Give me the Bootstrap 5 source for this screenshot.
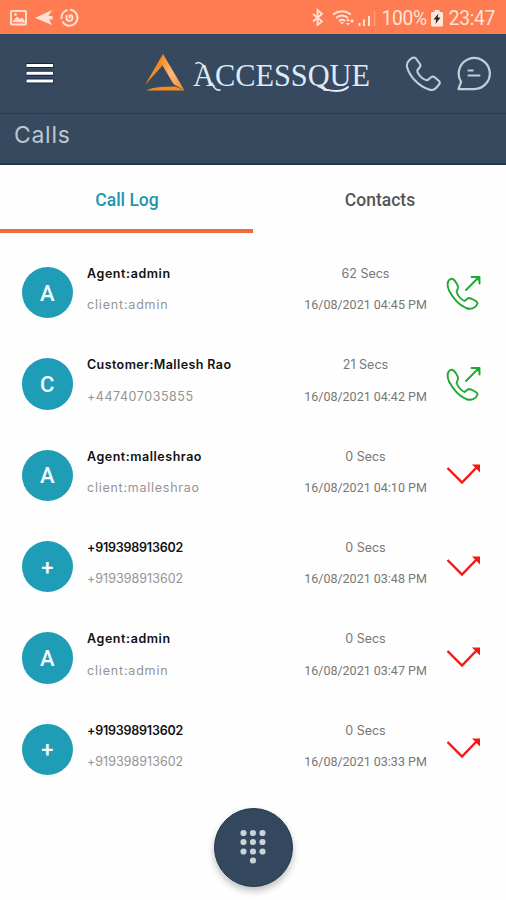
<!DOCTYPE html>
<html lang="en">
<head>
<meta charset="utf-8">
<meta name="viewport" content="width=device-width, initial-scale=1">
<title>Accessque - Calls</title>
<link href="https://cdn.jsdelivr.net/npm/bootstrap@5.3.0/dist/css/bootstrap.min.css" rel="stylesheet">
<style>
body{font-family:Inter,"Liberation Sans",sans-serif;height:900px;overflow:hidden;background:#fefefe}
svg{display:block;flex-shrink:0}
.status-bar{height:34px;background:#ff7c53;color:#ffe3d6;font:400 19.3px Roboto,sans-serif;letter-spacing:-.35px;padding:2px 11px 0 9px}
.status-bar .charge{margin-left:5px}
.status-bar .clock{margin-left:6px}
.app-bar{height:80px;background:#36495f;border-bottom:1px solid #2a3a50;padding:0 15px 0 26px}
.brand-logo{margin-left:85px;margin-right:auto;overflow:visible}
.title-bar{height:50.5px;background:#36495f;color:#bcc8d0;border-bottom:2px solid #1d3656;font-size:23px;letter-spacing:.7px;padding:0 14px 4px}
.tab-row{height:68px}
.tab-row .nav-link{font:500 17.5px Roboto,sans-serif;color:#555;border-radius:0;border-bottom:4px solid transparent;padding:6px 0 0 1px}
.tab-row .nav-link.active{color:#1f96ad;border-color:#f06a3c}
.call-list{padding-top:14.5px}
.call-row{height:91.35px;padding:0 24px 0 21.5px}
.avatar{width:51.5px;height:51.5px;background:#209db6;color:#f2fbfd;font:500 22px Roboto,sans-serif;flex-shrink:0;padding-top:1px}
.who,.when{margin-top:-6.5px}
.who{width:200px;margin-left:14px}
.who div,.when div{height:31.6px;line-height:31.6px;white-space:nowrap}
.caller{font-size:12.5px;font-weight:600;color:#111}
.number{font-size:12.5px;color:#949494}
.when{width:157px;font-size:12.5px;color:#777;text-align:center}
.when .stamp{font:400 12.5px/31.6px Roboto,sans-serif;color:#777}
.name-a{letter-spacing:.58px}.name-b{letter-spacing:.4px}.name-c{letter-spacing:.52px}.name-d{letter-spacing:-.22px}
.sub-a{letter-spacing:.82px}.sub-b{letter-spacing:.55px}.sub-c{letter-spacing:.75px}.sub-d{letter-spacing:.03px}
.dial{width:79px;height:79px;background:#33475f;border:1px solid #203650;box-shadow:0 4px 7px rgba(0,0,0,.25);padding:0;margin-top:12.5px}
</style>
<script src="https://cdn.jsdelivr.net/npm/bootstrap@5.3.0/dist/js/bootstrap.bundle.min.js"></script>
</head>
<body>
<svg width="0" height="0" class="position-absolute">
  <symbol id="outgoing" viewBox="0 0 36 36">
    <g fill="none" stroke="#22a832" stroke-width="1.9" stroke-linecap="round" stroke-linejoin="round">
      <path d="M4.500 4C1 6 .8 10 3 15.500C7 23 13 30 20 33C25 35 30 33 31.500 28.500C32 26.500 25 23 22.500 23L18.500 26C15 24.500 12 20.500 10.500 17L12 13C12.500 11 8 2 4.500 4Z"/>
      <path d="M20 15L32 3M25.500 2H33.500V8.500"/>
    </g>
    <path fill="#22a832" d="M28 1.500H34V7.500Z"/>
  </symbol>
  <symbol id="missed" viewBox="0 0 36 36">
    <path d="M1.500 11L16 25.500L31 10" fill="none" stroke="#f51616" stroke-width="2.400"/>
    <path d="M26 7.500H34V15.500Z" fill="#f51616"/>
  </symbol>
</svg>

<header>
  <div class="status-bar d-flex align-items-center justify-content-between">
    <svg width="72" height="20" viewBox="0 0 72 20" fill="none" stroke="#ffe0d2">
      <rect x="2" y="3" width="15" height="13.500" rx="1" stroke-width="2"/>
      <path d="M4 13.500L8 9L11 11.500L13 10L16 14Z" fill="#ffe0d2"/><circle cx="6.500" cy="6.500" r="1" fill="#ffe0d2"/>
      <path d="M26 10L43 2L39.500 8H43.500V11.500H40L43 17Z" fill="#ffe0d2" stroke="none"/>
      <circle cx="60.500" cy="9.700" r="8" stroke-width="2" stroke-dasharray="21 2.500 12 2.500"/>
      <path d="M57.500 7V10a3 3 0 0 0 6 0a3 3 0 0 0-2-3M60.500 6.500V10.500" stroke-width="1.900"/>
    </svg>
    <div class="d-flex align-items-center">
      <svg width="66" height="22" viewBox="0 0 66 22" fill="none" stroke="#ffe3d6">
        <path d="M2 7L11 14.500L6.500 18V3L11 7L2 14.500" stroke-width="1.800"/>
        <g stroke-width="1.800"><path d="M22 7.500Q31 1 40 7.500M25 11Q31 6 37 11M28 14Q31 11.500 34 14"/></g>
        <path d="M29 15L31 17.500L33 15ZM35 14L37 11.500L39 14ZM35 16H39L37 18.500ZM39 14L41 12L43 14L41 16Z" fill="#ffe3d6" stroke="none"/>
        <path d="M48.500 19V16M53 19V12.500M58 19V9" stroke-width="2"/>
        <path d="M63.500 19V4" stroke-width="1.500" opacity=".35"/>
      </svg>
      <span class="charge">100%</span>
      <svg class="ms-1" width="12" height="19" viewBox="0 0 12 19"><path fill="#ffe9df" d="M1.500 3H3.500V1H8.500V3H10.500Q12 3 12 4.500V16Q12 17.500 10.500 17.500H1.500Q0 17.500 0 16V4.500Q0 3 1.500 3Z"/><path d="M7.500 4.500L2.500 10.500H5.200L4.500 15L9.500 8.500H6.700Z" fill="#33231c"/></svg>
      <span class="clock">23:47</span>
    </div>
  </div>

  <nav class="app-bar d-flex align-items-center">
    <svg width="28" height="24" viewBox="0 0 28 24"><path d="M0 3.500H27.500M0 11.200H27.500M0 18.900H27.500" stroke="#14244b" stroke-width="5"/><path d="M.5 3.500H27M.5 11.200H27M.5 18.900H27" stroke="#fff" stroke-width="3"/></svg>
    <svg class="brand-logo" width="236" height="50" viewBox="0 0 236 50" role="img">
      <defs><linearGradient id="edge" x1="0" y1="0" x2="1" y2="1"><stop offset="0" stop-color="#f58a1c"/><stop offset=".5" stop-color="#ffb779"/><stop offset="1" stop-color="#f28a27"/></linearGradient></defs>
      <path fill="#f58b20" d="M24 5L6 36L23.500 16.500Z"/>
      <path fill="url(#edge)" d="M24 5L45.500 41.500L34.500 35L22 14Z"/>
      <path fill="#f58b20" d="M45.500 41.500H7.500Q13.500 37.500 36.500 37.500Z"/>
      <text x="54" y="36.500" textLength="177" lengthAdjust="spacingAndGlyphs" font-family="Liberation Serif, serif" font-size="32.500" fill="#dfeaf7">ACCESSQUE</text>
      <path d="M57 14.500Q60 12 64 16M73 34Q76 42 81 41" fill="none" stroke="#dfeaf7" stroke-width="1.600" stroke-linecap="round"/>
      <path d="M179 37Q188 42 197 42Q205 42 209 38" fill="none" stroke="#dfeaf7" stroke-width="2" stroke-linecap="round"/>
    </svg>
    <div class="d-flex">
      <svg width="37" height="38" viewBox="-1 -1 37 38" fill="none" stroke="#c0d0d9" stroke-width="2.100" stroke-linejoin="round"><path d="M4 4.500L7 2Q9 .7 11 2.500L15 8Q16 10 14.500 11.500L12.500 14Q12 16 13.500 18Q17 23 21 24Q23 24.500 24.500 22.500L26.500 21Q28 20 30 21.500L34 25Q35.500 27 34 28.500L31 32Q28.500 35 24 33.500C13 30 4.500 20 2 11Q1.300 7 4 4.500Z"/></svg>
      <svg class="ms-3" width="34" height="37" viewBox="1 0 35 37" fill="none" stroke="#c0d0d9" stroke-width="2.300"><path d="M2.500 34.500L5.200 27A16 16 0 1 1 18.500 34.500Z" stroke-linejoin="round"/><path d="M12 15.500H18M12 20.500H25" stroke-width="2"/></svg>
    </div>
  </nav>
  <h1 class="title-bar d-flex align-items-center m-0 fw-normal">Calls</h1>
</header>

<ul class="nav nav-pills nav-fill tab-row">
  <li class="nav-item col-6 d-flex"><a class="nav-link active bg-transparent w-100 d-flex align-items-center justify-content-center" href="#">Call Log</a></li>
  <li class="nav-item col-6 d-flex"><a class="nav-link w-100 d-flex align-items-center justify-content-center" href="#">Contacts</a></li>
</ul>

<main class="call-list">
  <div class="call-row d-flex align-items-center"><div class="avatar rounded-circle d-flex align-items-center justify-content-center">A</div><div class="who"><div class="caller name-a">Agent:admin</div><div class="number sub-a">client:admin</div></div><div class="when"><div>62 Secs</div><div class="stamp">16/08/2021 04:45 PM</div></div><svg class="ms-auto" width="36" height="36"><use href="#outgoing"/></svg></div>
  <div class="call-row d-flex align-items-center"><div class="avatar rounded-circle d-flex align-items-center justify-content-center">C</div><div class="who"><div class="caller name-b">Customer:Mallesh Rao</div><div class="number sub-b">+447407035855</div></div><div class="when"><div>21 Secs</div><div class="stamp">16/08/2021 04:42 PM</div></div><svg class="ms-auto" width="36" height="36"><use href="#outgoing"/></svg></div>
  <div class="call-row d-flex align-items-center"><div class="avatar rounded-circle d-flex align-items-center justify-content-center">A</div><div class="who"><div class="caller name-c">Agent:malleshrao</div><div class="number sub-c">client:malleshrao</div></div><div class="when"><div>0 Secs</div><div class="stamp">16/08/2021 04:10 PM</div></div><svg class="ms-auto" width="36" height="36"><use href="#missed"/></svg></div>
  <div class="call-row d-flex align-items-center"><div class="avatar rounded-circle d-flex align-items-center justify-content-center">+</div><div class="who"><div class="caller name-d">+919398913602</div><div class="number sub-d">+919398913602</div></div><div class="when"><div>0 Secs</div><div class="stamp">16/08/2021 03:48 PM</div></div><svg class="ms-auto" width="36" height="36"><use href="#missed"/></svg></div>
  <div class="call-row d-flex align-items-center"><div class="avatar rounded-circle d-flex align-items-center justify-content-center">A</div><div class="who"><div class="caller name-a">Agent:admin</div><div class="number sub-a">client:admin</div></div><div class="when"><div>0 Secs</div><div class="stamp">16/08/2021 03:47 PM</div></div><svg class="ms-auto" width="36" height="36"><use href="#missed"/></svg></div>
  <div class="call-row d-flex align-items-center"><div class="avatar rounded-circle d-flex align-items-center justify-content-center">+</div><div class="who"><div class="caller name-d">+919398913602</div><div class="number sub-d">+919398913602</div></div><div class="when"><div>0 Secs</div><div class="stamp">16/08/2021 03:33 PM</div></div><svg class="ms-auto" width="36" height="36"><use href="#missed"/></svg></div>
</main>

<button class="dial rounded-circle d-flex align-items-center justify-content-center mx-auto" type="button" aria-label="Dial pad">
  <svg width="28" height="36" viewBox="0 0 28 36" fill="#cbd3d6"><circle cx="4.500" cy="4" r="3.100"/><circle cx="14" cy="4" r="3.100"/><circle cx="23.500" cy="4" r="3.100"/><circle cx="4.500" cy="13" r="3.100"/><circle cx="14" cy="13" r="3.100"/><circle cx="23.500" cy="13" r="3.100"/><circle cx="4.500" cy="22.500" r="3.100"/><circle cx="14" cy="22.500" r="3.100"/><circle cx="23.500" cy="22.500" r="3.100"/><circle cx="14" cy="31.500" r="3.100"/></svg>
</button>
</body>
</html>
